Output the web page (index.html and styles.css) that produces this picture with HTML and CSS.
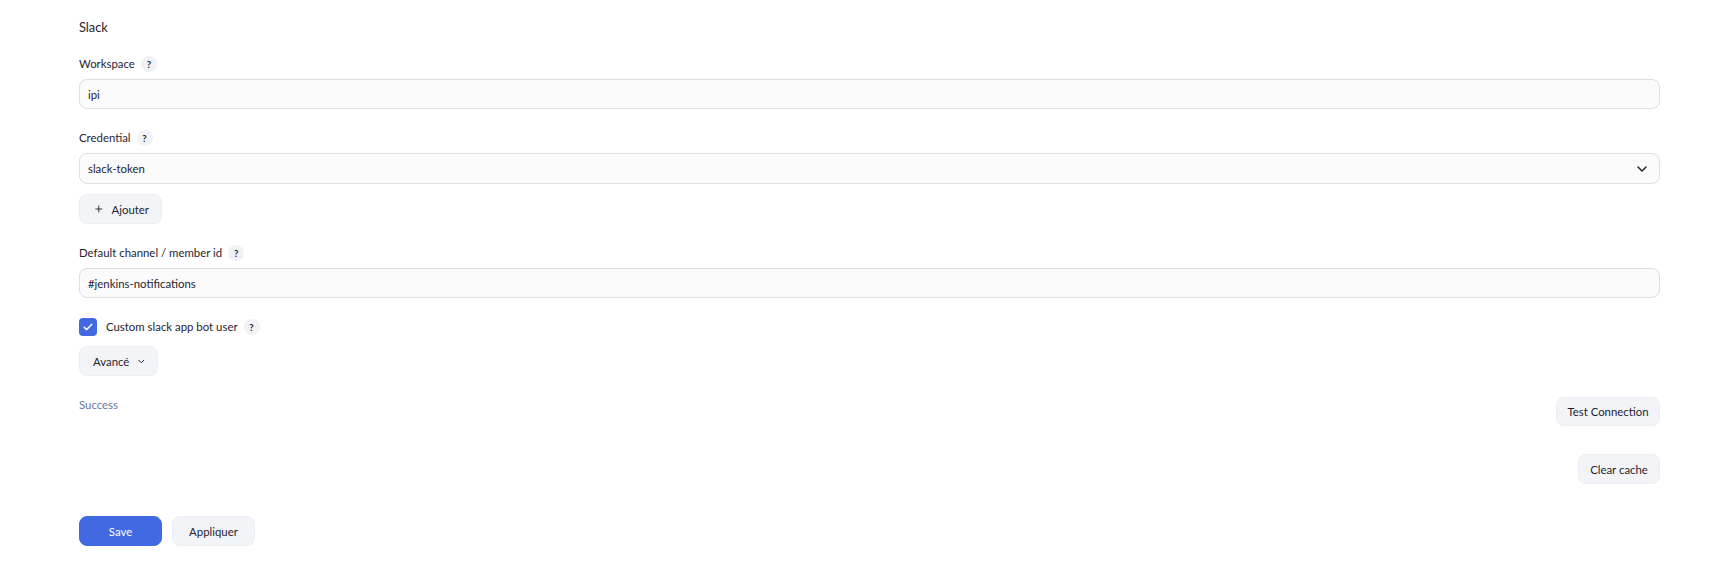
FILE: index.html
```html
<!DOCTYPE html>
<html lang="fr">
<head>
<meta charset="utf-8">
<title>Slack</title>
<link rel="stylesheet" href="styles.css">
</head>
<body>
<div class="page">
  <div class="section-title">Slack</div>

  <div class="field">
    <div class="label-row"><span class="label">Workspace</span><span class="help">?</span></div>
    <div class="input">ipi</div>
  </div>

  <div class="field">
    <div class="label-row"><span class="label">Credential</span><span class="help">?</span></div>
    <div class="input select">slack-token
      <svg class="chev" width="10" height="6" viewBox="0 0 10 6"><path d="M1 1l4 4 4-4" fill="none" stroke="#1f2430" stroke-width="1.5" stroke-linecap="round" stroke-linejoin="round"/></svg>
    </div>
    <button class="btn btn-add"><svg width="10" height="10" viewBox="0 0 10 10"><path d="M5 1v8M1 5h8" stroke="#1f2430" stroke-width="1.2" stroke-linecap="round"/></svg><span>Ajouter</span></button>
  </div>

  <div class="field">
    <div class="label-row"><span class="label">Default channel / member id</span><span class="help">?</span></div>
    <div class="input">#jenkins-notifications</div>
  </div>

  <div class="check-row">
    <span class="checkbox"><svg width="10" height="8" viewBox="0 0 10 8"><path d="M1.2 4.2l2.5 2.4 5-5.2" fill="none" stroke="#fff" stroke-width="1.5" stroke-linecap="round" stroke-linejoin="round"/></svg></span>
    <span class="label">Custom slack app bot user</span><span class="help">?</span>
  </div>

  <button class="btn btn-adv"><span>Avancé</span><svg width="8" height="5" viewBox="0 0 8 5"><path d="M1 1l3 3 3-3" fill="none" stroke="#1f2430" stroke-width="1.2" stroke-linecap="round" stroke-linejoin="round"/></svg></button>

  <div class="test-row">
    <span class="success">Success</span>
    <button class="btn">Test Connection</button>
  </div>

  <div class="cache-row">
    <button class="btn">Clear cache</button>
  </div>

  <div class="actions">
    <button class="btn btn-primary">Save</button>
    <button class="btn btn-apply">Appliquer</button>
  </div>
</div>
</body>
</html>
```
FILE: styles.css
```css
html, body {
  margin: 0;
  padding: 0;
  background: #ffffff;
}
body {
  font-family: "Lato", "Noto Sans", sans-serif;
  font-size: 11.4px;
  color: #1f2430;
}
.page {
  padding: 17px 62px 0 79px;
}
.section-title {
  font-size: 12.8px;
  line-height: 20px;
  height: 20px;
  margin-bottom: 17px;
}
.field {
  margin-bottom: 19px;
}
.label-row {
  display: flex;
  align-items: center;
  gap: 6px;
  height: 20px;
  margin-bottom: 5px;
}
.label {
  line-height: 20px;
}
.help {
  width: 16px;
  height: 16px;
  border-radius: 50%;
  background: #f1f2f6;
  font-size: 9.5px;
  font-weight: 700;
  display: flex;
  align-items: center;
  justify-content: center;
  color: #1f2430;
}
.input {
  box-sizing: border-box;
  height: 30px;
  border: 1px solid #dcdde7;
  border-radius: 8px;
  background: #fbfbfc;
  padding: 0 8px;
  display: flex;
  align-items: center;
}
.select {
  height: 31px;
  justify-content: space-between;
  padding-right: 12px;
}
.chev { margin-top: 1px; }
.btn {
  box-sizing: border-box;
  height: 30px;
  border: 1px solid #eceef3;
  border-radius: 8px;
  background: #f3f4f8;
  font-family: inherit;
  font-size: 11.4px;
  color: #1f2430;
  padding: 0 12px;
  display: inline-flex;
  align-items: center;
  gap: 8px;
  white-space: nowrap;
  cursor: pointer;
}
.btn-add {
  margin-top: 10px;
  width: 83px;
  padding-left: 15px;
  gap: 9px;
}
.check-row {
  display: flex;
  align-items: center;
  height: 18px;
  margin-top: 20px;
}
.checkbox {
  width: 18px;
  height: 18px;
  border-radius: 4px;
  background: #4169e1;
  display: flex;
  align-items: center;
  justify-content: center;
  margin-right: 9px;
}
.check-row .help { margin-left: 6px; }
.btn-adv {
  display: flex;
  margin-top: 10px;
  width: 79px;
  padding-left: 13px;
  gap: 9px;
}
.test-row {
  display: flex;
  justify-content: space-between;
  align-items: flex-start;
  margin-top: 21px;
}
.success {
  color: #6878a8;
  font-size: 11.4px;
  line-height: 16px;
}
.test-row .btn { width: 104px; justify-content: center; height: 29px; padding: 0; }
.cache-row {
  display: flex;
  justify-content: flex-end;
  margin-top: 28px;
}
.cache-row .btn { width: 82px; justify-content: center; padding: 0; }
.actions {
  display: flex;
  gap: 10px;
  margin-top: 32px;
}
.actions .btn { width: 83px; justify-content: center; padding: 0; }
.btn-primary {
  background: #4169e1;
  border-color: #4169e1;
  color: #ffffff;
}
```
